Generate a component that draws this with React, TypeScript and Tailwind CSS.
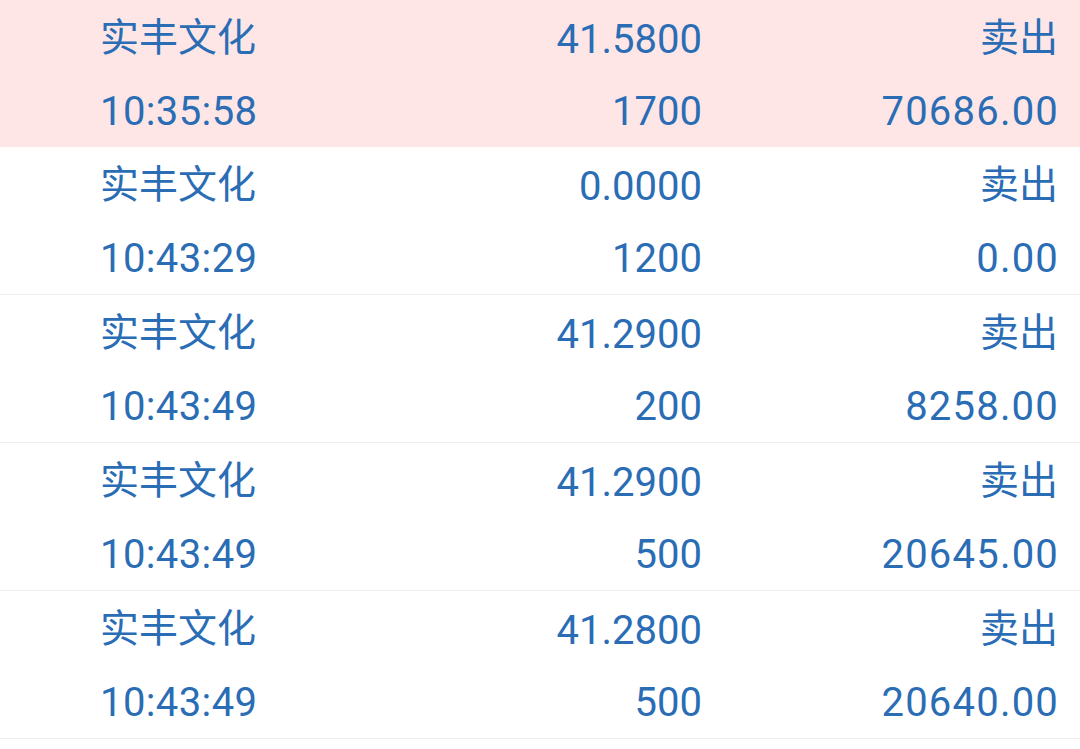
const ROWS = [
  { name: "实丰文化", price: "41.5800", side: "卖出", time: "10:35:58", qty: "1700", amount: "70686.00", active: true },
  { name: "实丰文化", price: "0.0000", side: "卖出", time: "10:43:29", qty: "1200", amount: "0.00" },
  { name: "实丰文化", price: "41.2900", side: "卖出", time: "10:43:49", qty: "200", amount: "8258.00" },
  { name: "实丰文化", price: "41.2900", side: "卖出", time: "10:43:49", qty: "500", amount: "20645.00" },
  { name: "实丰文化", price: "41.2800", side: "卖出", time: "10:43:49", qty: "500", amount: "20640.00" },
];

// digits sit 2px lower than the CJK glyphs
const num = "pt-[4px] text-right";
const cjk = "text-[39px]";

export default function App() {
  return (
    <div
      className="h-[749px] w-[1080px] overflow-hidden bg-white text-[40px] text-[#2a6db5]"
      style={{ fontFamily: "Roboto, 'Noto Sans CJK SC', sans-serif" }}
    >
      {ROWS.map((row, i) => (
        <div
          key={i}
          className={
            row.active
              ? "h-[147px] bg-[#fee6e6] pt-[2px] pl-[100px] pr-[22px]"
              : "h-[148px] border-b border-[#f1eded] pt-[2px] pl-[100px] pr-[22px]"
          }
        >
          <div className="grid h-[72px] grid-cols-[302px_300px_356px] items-center leading-none">
            <span className={cjk}>{row.name}</span>
            <span className={num}>{row.price}</span>
            <span className={`${cjk} text-right`}>{row.side}</span>
          </div>
          <div className="grid h-[72px] grid-cols-[302px_300px_356px] items-center leading-none">
            <span className="pt-[4px] tracking-[0.4px]">{row.time}</span>
            <span className={num}>{row.qty}</span>
            <span className={`${num} tracking-[1.2px] [margin-right:-1px]`}>{row.amount}</span>
          </div>
        </div>
      ))}
    </div>
  );
}
